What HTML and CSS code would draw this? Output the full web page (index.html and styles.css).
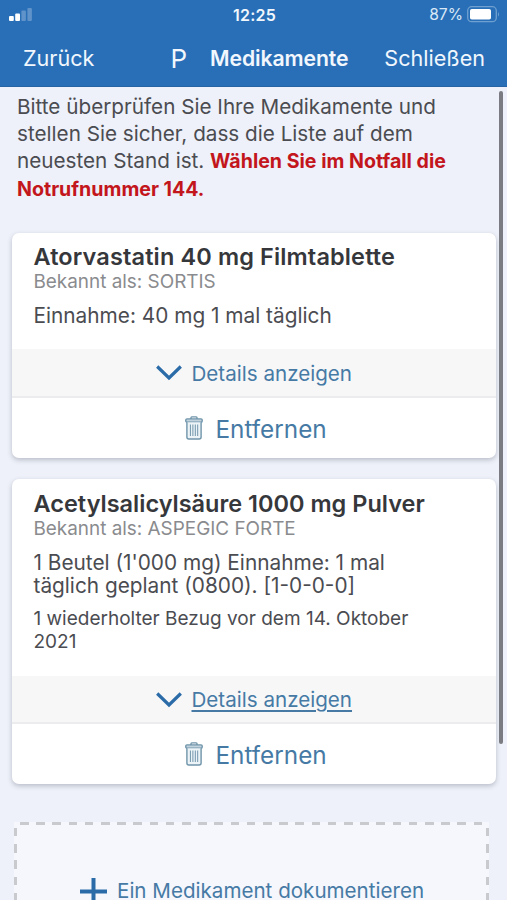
FILE: index.html
```html
<!DOCTYPE html>
<html lang="de">
<head>
<meta charset="utf-8">
<meta name="viewport" content="width=device-width, initial-scale=1">
<title>Medikamente</title>
<link rel="stylesheet" href="styles.css">
</head>
<body>
<svg class="defs" width="0" height="0" aria-hidden="true">
  <symbol id="chevron" viewBox="0 0 26 16"><path d="M1.200 1.500 13 13 24.800 1.500" fill="none" stroke="#2b6ca8" stroke-width="3.200"/></symbol>
  <symbol id="trash" viewBox="0 0 18 24"><g fill="none" stroke="#6f94aa" stroke-width="1.400"><path d="M6 3V1.700q0-.8.8-.8h4.400q.8 0 .8.800V3"/><rect x=".8" y="2.900" width="16.400" height="3.300" rx="1.200" fill="#c3d3de"/><path d="M1.900 6.200V21q0 2 2 2h10.200q2 0 2-2V6.200" fill="#edf4f8"/><path d="M5.400 8.500v11.500M7.900 8.500v11.500M10.300 8.500v11.500M12.700 8.500v11.500" stroke-width="1"/></g></symbol>
</svg>
<header class="header">
  <div class="status">
    <svg class="signal" viewBox="0 0 24 15"><g fill="#fff"><rect y="9" width="4.800" height="5" rx="1"/><rect x="6.200" y="6.500" width="4.800" height="7.500" rx="1"/><g opacity=".25"><rect x="12.400" y="3.500" width="4.500" height="10.500" rx="1"/><rect x="18.400" y="1" width="4.500" height="13" rx="1"/></g></g></svg>
    <span class="time">12:25</span>
    <span class="power"><span class="percent">87%</span>
    <svg class="battery" viewBox="0 0 33 17"><rect x=".7" y=".7" width="28.600" height="15" rx="4" fill="none" stroke="#6fa0d0" stroke-width="1.300"/><rect x="3" y="3" width="21" height="10.500" rx="1.800" fill="#fff"/><path d="M31 6v4.500q2-2.200 0-4.500" fill="#6fa0d0"/></svg></span>
  </div>
  <nav class="nav">
    <span class="back">Zurück</span>
    <span class="letter">P</span>
    <span class="heading">Medikamente</span>
    <span class="close">Schließen</span>
  </nav>
</header>
<main class="content">
  <p class="intro">Bitte überprüfen Sie Ihre Medikamente und<br>stellen Sie sicher, dass die Liste auf dem<br>neuesten Stand ist. <strong>Wählen Sie im Notfall die<br>Notrufnummer 144.</strong></p>
  <section class="card first">
    <div class="info">
      <h2>Atorvastatin 40 mg Filmtablette</h2>
      <p class="alias">Bekannt als: SORTIS</p>
      <p class="dose">Einnahme: 40 mg 1 mal täglich</p>
    </div>
    <div class="toggle"><svg class="chev"><use href="#chevron"/></svg><span>Details anzeigen</span></div>
    <div class="remove"><svg class="bin"><use href="#trash"/></svg><span>Entfernen</span></div>
  </section>
  <section class="card second">
    <div class="info">
      <h2>Acetylsalicylsäure 1000 mg Pulver</h2>
      <p class="alias">Bekannt als: ASPEGIC FORTE</p>
      <p class="dose">1 Beutel (1'000 mg) Einnahme: 1 mal<br>täglich geplant (0800). [1-0-0-0]</p>
      <p class="refill">1 wiederholter Bezug vor dem 14. Oktober<br>2021</p>
    </div>
    <div class="toggle"><svg class="chev"><use href="#chevron"/></svg><span class="underlined">Details anzeigen</span></div>
    <div class="remove"><svg class="bin"><use href="#trash"/></svg><span>Entfernen</span></div>
  </section>
  <div class="add"><svg class="plus" viewBox="0 0 27 27"><path d="M0 13.500h27M13.500 0v27" stroke="#2b6ca8" stroke-width="4"/></svg><span>Ein Medikament dokumentieren</span></div>
</main>
<div class="scrollbar"></div>
</body>
</html>
```
FILE: styles.css
```css
* { box-sizing: border-box; }
html, body { height: 900px; overflow: hidden; }
body { margin: 0; width: 507px; background: #eef1f9; color: #4b4c51; font-family: Inter, "Liberation Sans", sans-serif; }
h2, p { margin: 0; white-space: nowrap; }
.defs { position: absolute; }
.header { height: 87px; background: #296fb7; color: #f1f7fd; border-bottom: 1px solid #2664a5; }
.status { height: 29px; display: grid; grid-template-columns: 1fr auto 1fr; align-items: center; padding: 0 7px 0 9px; }
.signal { width: 24px; height: 15px; }
.time { font-size: 16px; font-weight: 600; letter-spacing: .2px; }
.power { display: flex; align-items: center; justify-content: flex-end; gap: 4px; }
.percent { font-size: 15.600px; color: #d9e8f6; }
.battery { width: 33px; height: 17px; }
.nav { height: 57px; display: flex; align-items: center; padding: 1px 22px 0 23px; font-size: 21.600px; white-space: nowrap; }
.letter { margin-left: 76px; font-size: 26px; }
.heading { margin-left: 23px; font-size: 21.200px; font-weight: 600; letter-spacing: -.1px; }
.close { margin-left: auto; }
.content { height: 813px; padding: 6px 11px 0 12px; overflow: hidden; }
.intro { height: 140px; padding-left: 5px; font-size: 20.700px; line-height: 27px; }
.intro strong { font-size: 19.600px; font-weight: 700; color: #c3161c; }
.card { display: flex; flex-direction: column; background: #fff; border-radius: 7px; box-shadow: 0 2px 5px rgba(70, 80, 100, .32); overflow: hidden; }
.first { height: 225px; }
.second { height: 305px; margin-top: 21px; }
.info { flex: 1; padding: 11px 0 0 21.500px; }
h2 { font-size: 23.500px; font-weight: 600; line-height: 26px; color: #36373b; }
.first h2 { letter-spacing: .13px; }
.first .dose { margin-top: 10px; }
.second .info { padding-top: 12px; }
.second .dose { margin-top: 10px; }
.alias { font-size: 18.900px; line-height: 24px; color: #8a8b8e; }
.dose { margin-top: 11px; font-size: 20.800px; line-height: 23px; }
.refill { margin-top: 10px; font-size: 19px; line-height: 23px; }
.toggle { height: 49px; display: flex; align-items: center; padding: 1px 0 0 144px; gap: 9.500px; background: #f7f7f8; border-bottom: 2px solid #ececee; color: #467aa5; font-size: 20.600px; white-space: nowrap; }
.second .toggle { height: 48px; margin-bottom: 0; }
.underlined { text-decoration: underline; text-decoration-thickness: 1.500px; text-underline-offset: 3px; }
.chev { width: 26px; height: 16px; }
.remove { height: 60px; display: flex; align-items: center; padding: 1px 0 0 173px; gap: 12.500px; color: #467aa5; font-size: 24.300px; white-space: nowrap; }
.bin { width: 18px; height: 24px; margin-top: -2px; }
.add { margin: 38px 7px 0 2px; height: 140px; padding: 55px 0 0 66px; display: flex; align-items: flex-start; gap: 10px; color: #467aa5; font-size: 20.600px; line-height: 28px; white-space: nowrap;
  background:
    repeating-linear-gradient(90deg, #c8cacd 0 8.500px, transparent 8.500px 16.200px) 6px 0 / 462px 3px no-repeat,
    repeating-linear-gradient(#c8cacd 0 8.500px, transparent 8.500px 16.200px) 0 6px / 3px 130px no-repeat,
    repeating-linear-gradient(#c8cacd 0 8.500px, transparent 8.500px 16.200px) 100% 6px / 3px 130px no-repeat,
    #f5f7fc; }
.plus { width: 27px; height: 27px; margin-top: 1px; }
.scrollbar { position: absolute; left: 499px; top: 91px; width: 4px; height: 653px; border-radius: 2px; background: #7b7c82; }
```
